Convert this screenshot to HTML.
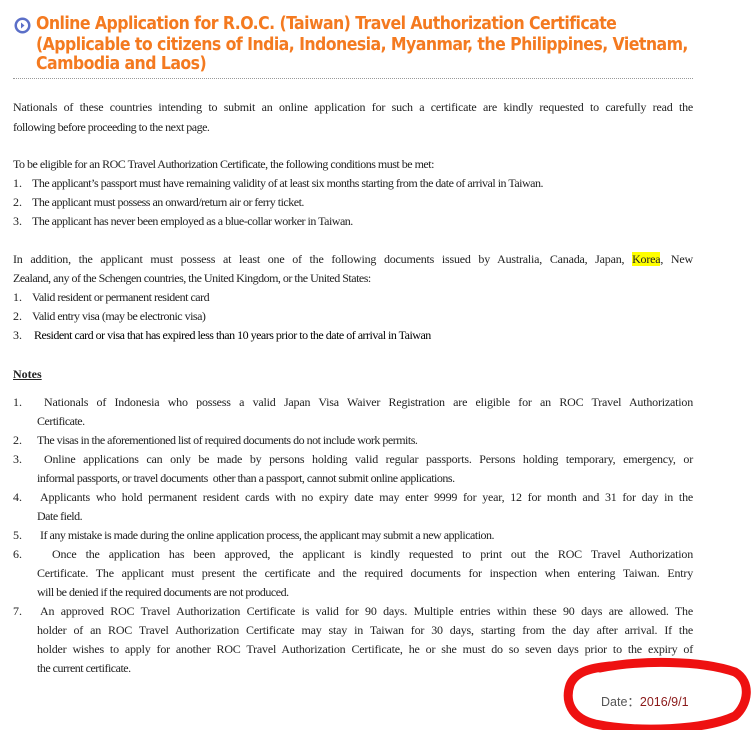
<!DOCTYPE html>
<html><head><meta charset="utf-8"><style>
body{margin:0;width:751px;height:730px;background:#fff;position:relative;overflow:hidden}
.t{position:absolute;left:36px;font:bold 17.5px "DejaVu Sans Condensed","Liberation Sans",sans-serif;color:#f47a20;white-space:nowrap;letter-spacing:-0.55px}
.l{position:absolute;font:12px "Liberation Serif",serif;color:#222;white-space:nowrap;letter-spacing:-0.5px;line-height:14px}
.j{text-align:justify;text-align-last:justify;letter-spacing:-0.2px;white-space:normal;height:14px;overflow:visible}
.n{position:absolute;left:13px;font:12px "Liberation Serif",serif;color:#222;line-height:14px}
</style></head><body>
<svg style="position:absolute;left:14px;top:17px" width="17" height="17"><circle cx="8.5" cy="8.5" r="8" fill="#5b6fc8"/><circle cx="8.5" cy="8.5" r="5.5" fill="#fff"/><path d="M7 5.5L10.5 8.5L7 11.5Z" fill="#5b6fc8"/></svg>
<div class="t" style="top:14px">Online Application for R.O.C. (Taiwan) Travel Authorization Certificate</div>
<div class="t" style="top:35px">(Applicable to citizens of India, Indonesia, Myanmar, the Philippines, Vietnam,</div>
<div class="t" style="top:54px">Cambodia and Laos)</div>
<div style="position:absolute;left:13px;top:78px;width:680px;border-top:1px dotted #999"></div>

<div class="l j" style="top:100px;left:13px;width:680px">Nationals of these countries intending to submit an online application for such a certificate are kindly requested to carefully read the</div>
<div class="l" style="top:120px;left:13px">following before proceeding to the next page.</div>
<div class="l" style="top:157px;left:13px">To be eligible for an ROC Travel Authorization Certificate, the following conditions must be met:</div>
<div class="n" style="top:176px">1.</div><div class="l" style="top:176px;left:32px">The applicant’s passport must have remaining validity of at least six months starting from the date of arrival in Taiwan.</div>
<div class="n" style="top:195px">2.</div><div class="l" style="top:195px;left:32px">The applicant must possess an onward/return air or ferry ticket.</div>
<div class="n" style="top:214px">3.</div><div class="l" style="top:214px;left:32px">The applicant has never been employed as a blue-collar worker in Taiwan.</div>
<div class="l j" style="top:252px;left:13px;width:680px">In addition, the applicant must possess at least one of the following documents issued by Australia, Canada, Japan, <span style="background:#ffff00">Korea</span>, New</div>
<div class="l" style="top:271px;left:13px">Zealand, any of the Schengen countries, the United Kingdom, or the United States:</div>
<div class="n" style="top:290px">1.</div><div class="l" style="top:290px;left:32px">Valid resident or permanent resident card</div>
<div class="n" style="top:309px">2.</div><div class="l" style="top:309px;left:32px">Valid entry visa (may be electronic visa)</div>
<div class="n" style="top:328px">3.</div><div class="l" style="top:328px;left:34px;color:#000">Resident card or visa that has expired less than 10 years prior to the date of arrival in Taiwan</div>
<div class="l" style="top:367px;left:13px;font-weight:bold;text-decoration:underline;letter-spacing:0">Notes</div>

<div class="n" style="top:395px">1.</div><div class="l j" style="top:395px;left:44px;width:649px">Nationals of Indonesia who possess a valid Japan Visa Waiver Registration are eligible for an ROC Travel Authorization</div>
<div class="l" style="top:414px;left:37px">Certificate.</div>
<div class="n" style="top:433px">2.</div><div class="l" style="top:433px;left:37px">The visas in the aforementioned list of required documents do not include work permits.</div>
<div class="n" style="top:452px">3.</div><div class="l j" style="top:452px;left:44px;width:649px">Online applications can only be made by persons holding valid regular passports. Persons holding temporary, emergency, or</div>
<div class="l" style="top:471px;left:37px">informal passports, or travel documents &nbsp;other than a passport, cannot submit online applications.</div>
<div class="n" style="top:490px">4.</div><div class="l j" style="top:490px;left:40px;width:653px">Applicants who hold permanent resident cards with no expiry date may enter 9999 for year, 12 for month and 31 for day in the</div>
<div class="l" style="top:509px;left:37px">Date field.</div>
<div class="n" style="top:528px">5.</div><div class="l" style="top:528px;left:40px">If any mistake is made during the online application process, the applicant may submit a new application.</div>
<div class="n" style="top:547px">6.</div><div class="l j" style="top:547px;left:52px;width:641px">Once the application has been approved, the applicant is kindly requested to print out the ROC Travel Authorization</div>
<div class="l j" style="top:566px;left:37px;width:656px">Certificate. The applicant must present the certificate and the required documents for inspection when entering Taiwan. Entry</div>
<div class="l" style="top:585px;left:37px">will be denied if the required documents are not produced.</div>
<div class="n" style="top:604px">7.</div><div class="l j" style="top:604px;left:40px;width:653px">An approved ROC Travel Authorization Certificate is valid for 90 days. Multiple entries within these 90 days are allowed. The</div>
<div class="l j" style="top:623px;left:37px;width:656px">holder of an ROC Travel Authorization Certificate may stay in Taiwan for 30 days, starting from the day after arrival. If the</div>
<div class="l j" style="top:642px;left:37px;width:656px">holder wishes to apply for another ROC Travel Authorization Certificate, he or she must do so seven days prior to the expiry of</div>
<div class="l" style="top:661px;left:37px">the current certificate.</div>

<div style="position:absolute;left:601px;top:691px;font:12.5px 'Liberation Sans',sans-serif;color:#555">Date：<span style="color:#8b1a1a">2016/9/1</span></div>
<svg style="position:absolute;left:0;top:0" width="751" height="730"><path d="M600 668 C640 660 700 660 735 672 C752 682 748 705 735 716 C705 730 640 733 595 724 C570 718 565 700 570 685 C575 672 590 668 610 666" fill="none" stroke="#ee1111" stroke-width="9" stroke-linecap="round"/></svg>
</body></html>
